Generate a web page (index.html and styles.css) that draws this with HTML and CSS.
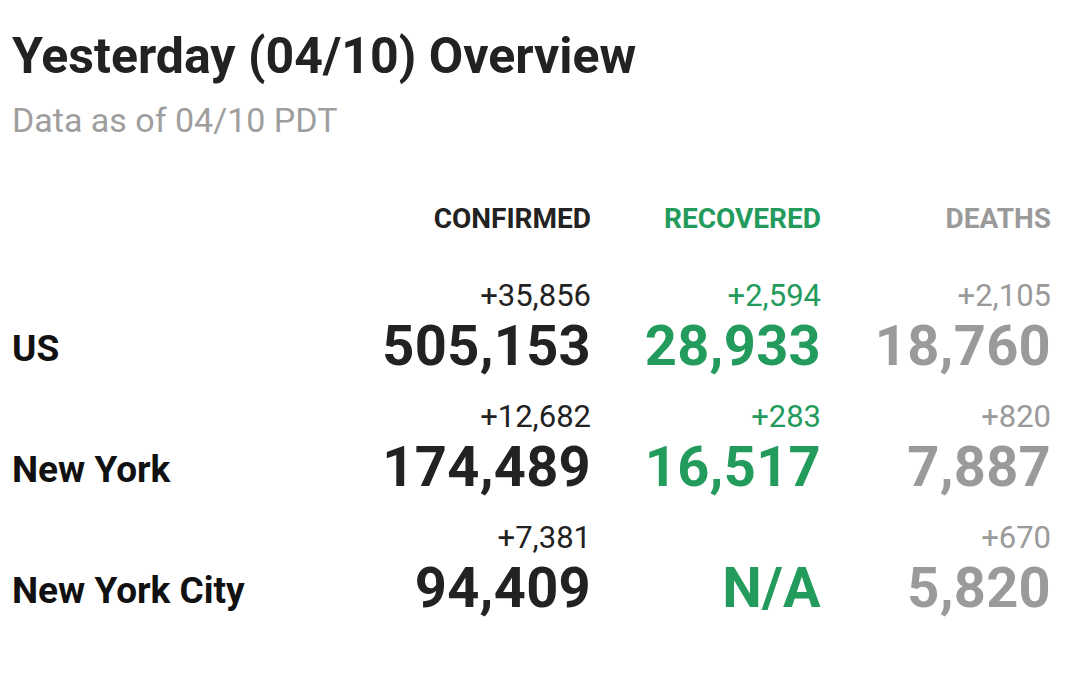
FILE: index.html
```html
<!DOCTYPE html>
<html lang="en">
<head>
  <meta charset="UTF-8">
  <meta name="viewport" content="width=device-width, initial-scale=1.0">
  <title>Yesterday Overview</title>
  <link rel="stylesheet" href="styles.css">
</head>
<body>
  <div class="overview">
    <h1>Yesterday (04/10) Overview</h1>
    <p class="as-of">Data as of 04/10 PDT</p>

    <div class="stats">
      <div class="head"></div>
      <div class="head confirmed">CONFIRMED</div>
      <div class="head recovered">RECOVERED</div>
      <div class="head deaths">DEATHS</div>

      <div class="place">US</div>
      <div class="cell confirmed"><span class="delta">+35,856</span><span class="total">505,153</span></div>
      <div class="cell recovered"><span class="delta">+2,594</span><span class="total">28,933</span></div>
      <div class="cell deaths"><span class="delta">+2,105</span><span class="total">18,760</span></div>

      <div class="place">New York</div>
      <div class="cell confirmed"><span class="delta">+12,682</span><span class="total">174,489</span></div>
      <div class="cell recovered"><span class="delta">+283</span><span class="total">16,517</span></div>
      <div class="cell deaths"><span class="delta">+820</span><span class="total">7,887</span></div>

      <div class="place">New York City</div>
      <div class="cell confirmed"><span class="delta">+7,381</span><span class="total">94,409</span></div>
      <div class="cell recovered"><span class="delta">&nbsp;</span><span class="total">N/A</span></div>
      <div class="cell deaths"><span class="delta">+670</span><span class="total">5,820</span></div>
    </div>
  </div>
</body>
</html>
```

FILE: styles.css
```css
body {
  font-family: Roboto, 'Noto Sans', sans-serif;
  margin: 0;
  padding: 0;
  background: #fff;
  color: #222;
}
.overview {
  padding: 27px 29px 0 12px;
}
h1 {
  font-size: 50px;
  font-weight: 700;
  margin: 0;
  line-height: 58px;
}
.as-of {
  font-size: 34px;
  color: #9e9e9e;
  margin: 15px 0 0;
  line-height: 40px;
}
.stats {
  display: grid;
  grid-template-columns: 1fr 230px 230px 230px;
  row-gap: 24px;
  margin-top: 63px;
}
.head {
  text-align: right;
  font-size: 28px;
  font-weight: 700;
  line-height: 32px;
  margin-bottom: 20px;
}
.confirmed { color: #222; }
.recovered { color: #239b5c; }
.deaths { color: #9a9a9a; }
.place {
  align-self: end;
  font-size: 37px;
  font-weight: 700;
  line-height: 42px;
  padding-bottom: 6px;
  color: #111;
}
.cell {
  display: flex;
  flex-direction: column;
  align-items: flex-end;
}
.delta {
  font-size: 31px;
  line-height: 34px;
}
.total {
  font-size: 56px;
  font-weight: 700;
  line-height: 60px;
  margin-top: 3px;
  letter-spacing: 0.3px;
}
```
